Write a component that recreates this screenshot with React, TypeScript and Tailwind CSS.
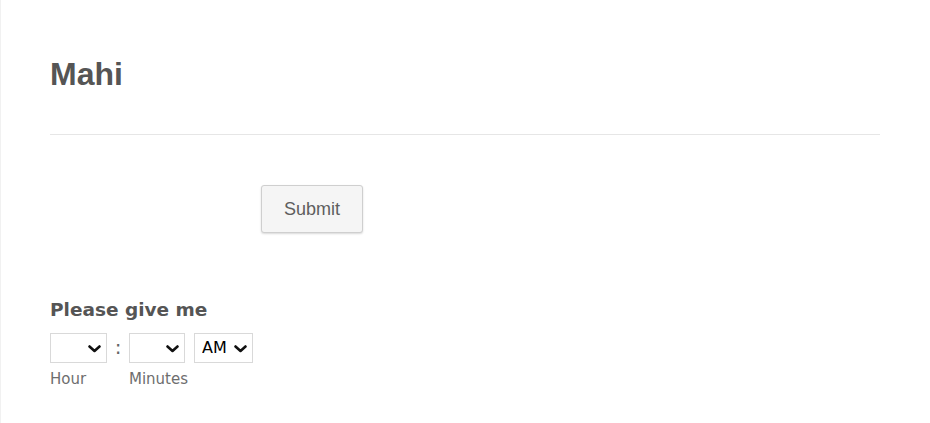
import React from "react";

function Chevron() {
  return (
    <svg
      className="pointer-events-none absolute right-[6px] top-[12px]"
      width="13"
      height="8"
      viewBox="0 0 13 8"
      fill="none"
    >
      <path d="M1.5 1.5 L6.5 6 L11.5 1.5" stroke="#111" strokeWidth="2.6" strokeLinecap="round" strokeLinejoin="round" />
    </svg>
  );
}

export default function App() {
  return (
    <div className="w-[930px] h-[423px] bg-white border-l border-[#f1f1f1] overflow-hidden">
      <div className="ml-[49px] w-[830px] pt-[54px]">
        <h1
          className="text-[32px] leading-[40px] font-bold text-[#555555]"
          style={{ fontFamily: '"Liberation Sans", Arial, sans-serif' }}
        >
          Mahi
        </h1>
        <div className="mt-[40px] h-px bg-[#e6e6e6]" />
        <div className="mt-[50px] pl-[211px]">
          <button
            className="w-[102px] h-[48px] bg-[#f5f5f5] border border-[#cfcfcf] rounded-[3px] shadow-[0_1px_2px_rgba(0,0,0,0.15)] text-[18px] text-[#5e5e5e]"
            style={{ fontFamily: '"Liberation Sans", Arial, sans-serif' }}
          >
            Submit
          </button>
        </div>
        <div
          className="mt-[66px]"
          style={{ fontFamily: '"DejaVu Sans", Verdana, sans-serif' }}
        >
          <div className="text-[18.5px] leading-[22px] font-bold text-[#555555]">
            Please give me
          </div>
          <div className="mt-[12px] flex items-start">
            <div className="flex flex-col w-[57px]">
              <div className="relative w-[57px] h-[30px]">
                <select className="appearance-none w-full h-full border border-[#d9d9d9] bg-white text-[16px] text-black pl-[7px]">
                  <option></option>
                </select>
                <Chevron />
              </div>
              <span className="mt-[7px] whitespace-nowrap text-[15px] leading-[18px] text-[#6e6e6e]">Hour</span>
            </div>
            <span className="w-[22px] text-center text-[20px] leading-[28px] text-[#666666]">:</span>
            <div className="flex flex-col w-[56px]">
              <div className="relative w-[56px] h-[30px]">
                <select className="appearance-none w-full h-full border border-[#d9d9d9] bg-white text-[16px] text-black pl-[7px]">
                  <option></option>
                </select>
                <Chevron />
              </div>
              <span className="mt-[7px] whitespace-nowrap text-[15px] leading-[18px] text-[#6e6e6e]">Minutes</span>
            </div>
            <div className="ml-[9px] relative w-[59px] h-[30px]">
              <select className="appearance-none w-full h-full border border-[#d9d9d9] bg-white text-[16px] text-black pl-[7px]">
                <option>AM</option>
                <option>PM</option>
              </select>
              <Chevron />
            </div>
          </div>
        </div>
      </div>
    </div>
  );
}
